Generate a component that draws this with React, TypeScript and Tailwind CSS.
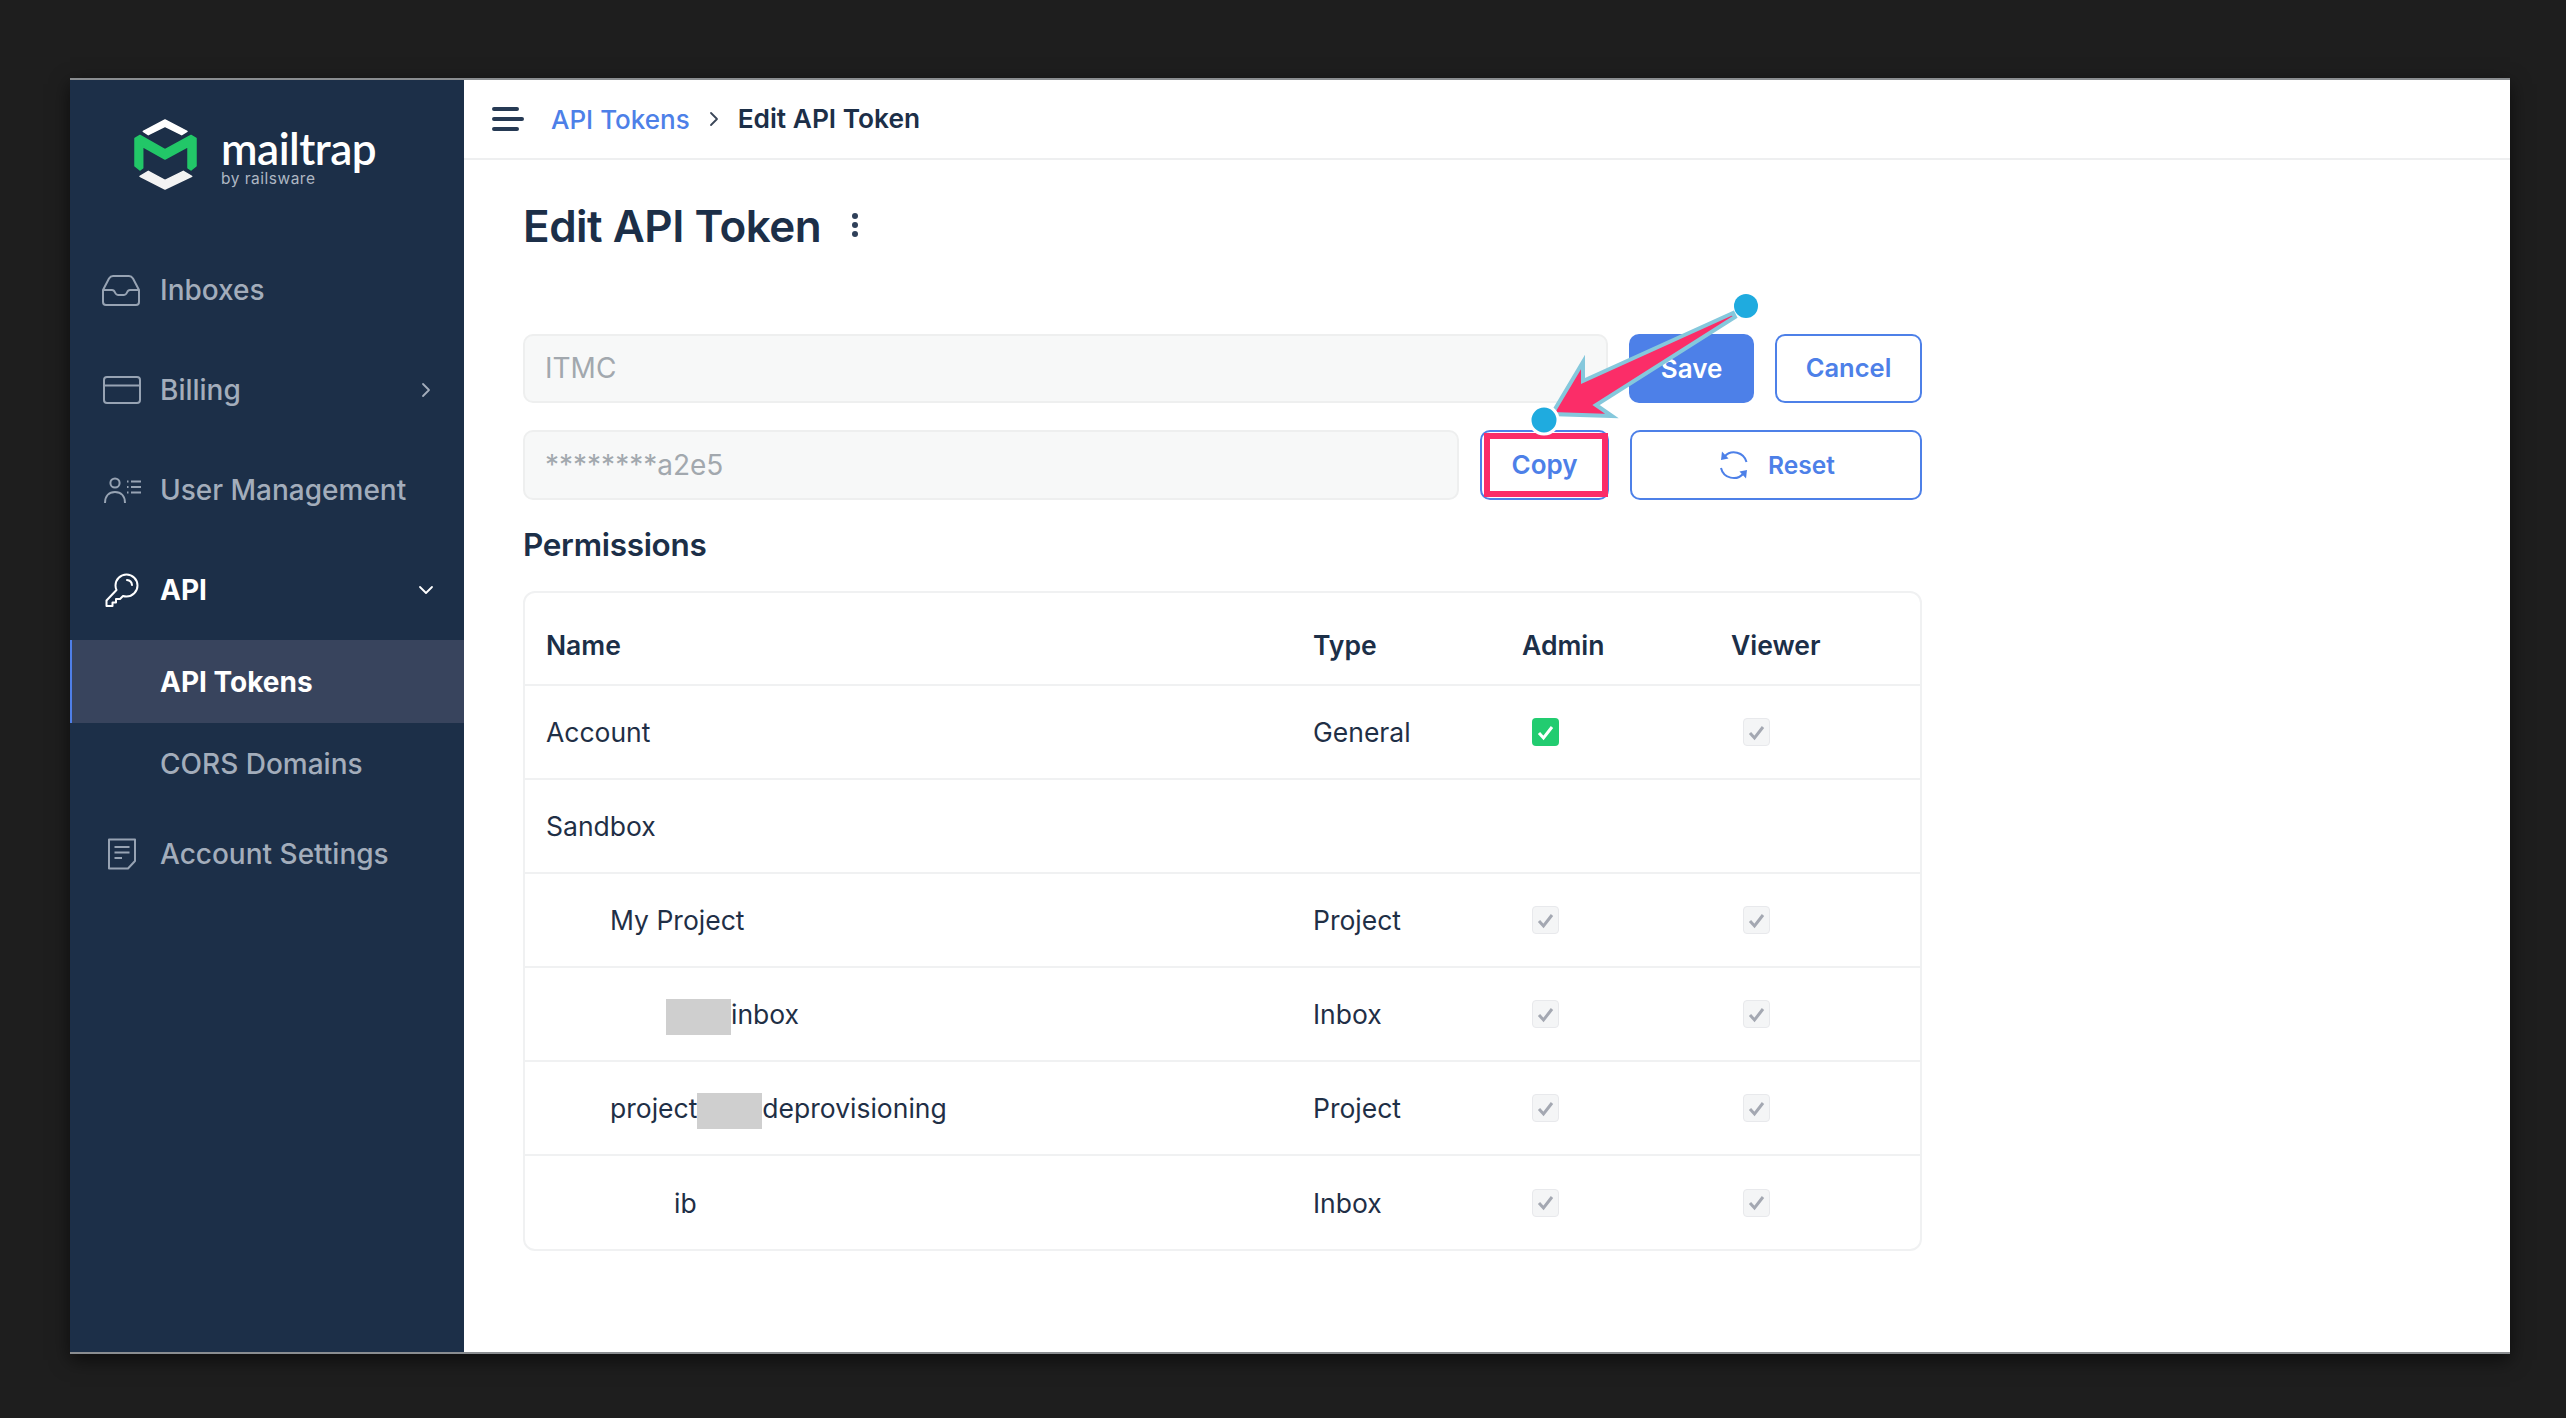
import React from "react";

const font = { fontFamily: '"Inter", "Liberation Sans", sans-serif' };

function Inbox() {
  return (
    <svg width="38" height="31" viewBox="0 0 38 31" fill="none" stroke="currentColor" strokeWidth="2">
      <path d="M1 15 L7 3.5 Q8.5 1 11 1 H27 Q29.5 1 31 3.5 L37 15 V27 Q37 30 34 30 H4 Q1 30 1 27 Z" strokeLinejoin="round" />
      <path d="M1 15 H10 Q12 15 13 17.5 Q14 20 16.5 20 H21.5 Q24 20 25 17.5 Q26 15 28 15 H37" />
    </svg>
  );
}
function Card() {
  return (
    <svg width="38" height="28" viewBox="0 0 38 28" fill="none" stroke="currentColor" strokeWidth="2" className="ml-[1px]">
      <rect x="1" y="1" width="36" height="26" rx="3" />
      <path d="M1 9.5 H37" />
    </svg>
  );
}
function UserList() {
  return (
    <svg width="38" height="27" viewBox="0 0 38 27" fill="none" stroke="currentColor" strokeWidth="2" className="ml-[2px]">
      <circle cx="11" cy="6" r="4.6" />
      <path d="M1 26 C1 19 5 15 11 15 C17 15 21 19 21 26" />
      <path d="M27 4.5 H37 M27 10 H37 M27 15.5 H37 M23 4.5 H24.5 M23 10 H24.5 M23 15.5 H24.5" />
    </svg>
  );
}
function Key() {
  return (
    <svg width="34" height="34" viewBox="0 0 34 34" fill="none" stroke="currentColor" strokeWidth="2" strokeLinejoin="round" className="ml-[3px]">
      <path d="M21.5 1.5 A11 11 0 0 1 32.5 12.5 A11 11 0 0 1 21.5 23.5 A11 11 0 0 1 18 23 L15 26 H11 V29.5 H7.5 V33 H1.5 V27.5 L11.5 17 A11 11 0 0 1 10.5 12.5 A11 11 0 0 1 21.5 1.5 Z" />
      <path d="M22 7 A5.5 5.5 0 0 1 27 12" strokeLinecap="round" />
    </svg>
  );
}
function Doc() {
  return (
    <svg width="30" height="32" viewBox="0 0 30 32" fill="none" stroke="currentColor" strokeWidth="2" strokeLinejoin="round" className="ml-[5px]">
      <path d="M2 1.5 H28 V23 L21 30.5 H2 Z" />
      <path d="M7.5 9 H22.5 M7.5 14.5 H22.5 M7.5 20 H15" />
    </svg>
  );
}
function Chevron({ down, className }: { down?: boolean; className?: string }) {
  return (
    <svg width="16" height="16" viewBox="0 0 16 16" fill="none" stroke="currentColor" strokeWidth="1.8" strokeLinecap="round" strokeLinejoin="round" className={className}>
      {down ? <path d="M2 5 L8 11 L14 5" /> : <path d="M5 2 L11 8 L5 14" />}
    </svg>
  );
}
function Logo() {
  return (
    <svg width="63" height="71" viewBox="0 0 63 71" strokeLinejoin="round">
      <path d="M9.3 12.3 L31 1 L53 12.3 L47.7 15.7 L31 7.3 L14.3 15.7 Z" fill="#fff" stroke="#fff" strokeWidth="1.5" />
      <path d="M1 19.5 L6 16.5 L31 30.7 L57 16.5 L62 19.5 V47 L57 51 L54 49 V27.5 L31 40 L8.7 27.5 V49 L6 51 L1 47 Z" fill="#22c768" stroke="#22c768" strokeWidth="1.5" />
      <path d="M6 57.3 L14.3 52.3 L31 61.3 L49.3 52.3 L57.7 57.3 L31 70 Z" fill="#f3f3f3" stroke="#f3f3f3" strokeWidth="1.5" />
    </svg>
  );
}
function Reset() {
  return (
    <svg width="30" height="30" viewBox="0 0 30 30" fill="none" stroke="#4d80e8" strokeWidth="2">
      <path d="M5.5 6.5 A13 13 0 0 1 27.5 12" />
      <path d="M24.5 23.5 A13 13 0 0 1 2 18" />
      <path d="M3 1.5 L9.5 8.5 L2 10 Z" fill="#4d80e8" stroke="none" />
      <path d="M27 28.5 L20.5 21.5 L28 20 Z" fill="#4d80e8" stroke="none" />
    </svg>
  );
}
function Check({ on, viewer }: { on?: boolean; viewer?: boolean }) {
  const place = viewer ? "ml-[12px] " : "ml-[10px] ";
  return (
    <div className={place + (on ? "flex h-[28px] w-[27px] items-center justify-center rounded-[4px] bg-[#22cc70]" : "flex h-[28px] w-[27px] items-center justify-center rounded-[4px] border border-[#e8e9ec] bg-[#f4f5f6]")}>
      <svg width="19" height="17" viewBox="0 0 19 17" fill="none" stroke={on ? "#fff" : "#a4a8b2"} strokeWidth="3">
        <path d="M3 9 L7.5 14 L16 3" />
      </svg>
    </div>
  );
}

const navText = "text-[28px] font-medium text-[#a3adbb]";

function NavRow({ icon, label, right, active }: { icon: React.ReactNode; label: string; right?: React.ReactNode; active?: boolean }) {
  return (
    <div className="flex h-[100px] items-center pl-[32px] pr-[30px]">
      <div className={active ? "flex w-[58px] shrink-0 justify-start text-white" : "flex w-[58px] shrink-0 justify-start text-[#97a3b3]"}>{icon}</div>
      <span className={active ? "text-[28px] font-bold text-white" : navText}>{label}</span>
      <div className="ml-auto flex">{right}</div>
    </div>
  );
}

function Redact() {
  return <span className="inline-block h-[36px] w-[65px] bg-[#cfcfcf] align-middle" />;
}

function Row({ name, indent, type, admin, checks = true, last }: { name: React.ReactNode; indent: string; type?: string; admin?: boolean; checks?: boolean; last?: boolean }) {
  return (
    <div className={last ? "grid h-[93px] grid-cols-[767px_209px_209px_1fr] items-center px-[21px] text-[#1f2f46]" : "grid h-[94px] grid-cols-[767px_209px_209px_1fr] items-center border-b-2 border-[#f0f1f2] px-[21px] text-[#1f2f46]"}>
      <div className={indent + " pt-[2px]"}>{name}</div>
      <div className="pt-[2px]">{type}</div>
      <div>{checks && <Check on={admin} />}</div>
      <div>{checks && <Check viewer />}</div>
    </div>
  );
}

export default function App() {
  return (
    <div className="relative h-[1418px] w-full overflow-hidden bg-[#1e1e1e] pt-[78px] pl-[70px] pr-[56px]" style={font}>
      <div className="flex h-[1276px] border-y-2 border-[#8a8d90] shadow-[0_6px_18px_rgba(0,0,0,0.6)]">
        <aside className="flex w-[394px] shrink-0 flex-col bg-[#1c2f48]">
          <div className="flex h-[160px] items-start pt-[39px] pl-[64px]">
            <Logo />
            <div className="ml-[24px] flex flex-col pt-[7px]">
              <span className="text-[44px] leading-[44px] font-semibold tracking-[-0.5px] text-white" style={{ fontFamily: '"Lato", sans-serif' }}>mailtrap</span>
              <span className="text-[15.5px] leading-[18px] tracking-[0.5px] text-[#aeb7c3]">by railsware</span>
            </div>
          </div>
          <NavRow icon={<Inbox />} label="Inboxes" />
          <NavRow icon={<Card />} label="Billing" right={<Chevron className="text-[#a3adbb]" />} />
          <NavRow icon={<UserList />} label="User Management" />
          <NavRow icon={<Key />} label="API" active right={<Chevron down className="text-white" />} />
          <div className="flex h-[83px] items-center border-l-2 border-[#4f7fe8] bg-[#38445d] pl-[88px] text-[28px] font-bold text-white">API Tokens</div>
          <div className={"flex h-[81px] items-center pl-[90px] " + navText}>CORS Domains</div>
          <NavRow icon={<Doc />} label="Account Settings" />
        </aside>
        <main className="flex min-w-0 flex-1 flex-col bg-white">
          <header className="flex h-[80px] shrink-0 items-center border-b-2 border-[#eeeff0] pl-[28px]">
            <svg width="32" height="26" viewBox="0 0 32 26" stroke="#263a54" strokeWidth="4" strokeLinecap="round">
              <path d="M2 3 H25 M2 13 H30 M2 23 H25" />
            </svg>
            <span className="ml-[27px] text-[26px] font-medium text-[#4d80e8]">API Tokens</span>
            <Chevron className="mx-[16px] text-[#3a4658]" />
            <span className="text-[26.3px] font-semibold text-[#1c2f48]">Edit API Token</span>
          </header>
          <div className="flex flex-1 flex-col pl-[59px]">
            <div className="flex h-[132px] items-center">
              <h1 className="text-[44px] font-semibold tracking-[-0.5px] text-[#1c2f48]">Edit API Token</h1>
              <div className="ml-[31px] flex flex-col gap-[3px] pb-[3px]">
                <span className="h-[6px] w-[6px] rounded-full bg-[#2f4059]" />
                <span className="h-[6px] w-[6px] rounded-full bg-[#2f4059]" />
                <span className="h-[6px] w-[6px] rounded-full bg-[#2f4059]" />
              </div>
            </div>
            <div className="mt-[42px] flex w-[1399px] gap-[21px]">
              <div className="flex h-[69px] flex-1 items-center rounded-[10px] border-2 border-[#eeefef] bg-[#f7f8f8] pb-[2px] pl-[20px] text-[28px] text-[#a2a8ae]">ITMC</div>
              <button className="h-[69px] w-[125px] rounded-[10px] bg-[#4d80e8] text-[26px] font-semibold text-white">Save</button>
              <button className="h-[69px] w-[147px] rounded-[10px] border-2 border-[#4d80e8] text-[25.5px] font-semibold text-[#4d80e8]">Cancel</button>
            </div>
            <div className="mt-[27px] flex w-[1399px] gap-[21px]">
              <div className="flex h-[70px] flex-1 items-center rounded-[10px] border-2 border-[#eeefef] bg-[#f7f8f8] pl-[20px] text-[28px] text-[#a2a8ae]">********a2e5</div>
              <button className="h-[70px] w-[129px] rounded-[10px] border-2 border-[#4d80e8] pb-[2px] text-[26px] font-semibold text-[#4d80e8]">Copy</button>
              <button className="flex h-[70px] w-[292px] items-center justify-center gap-[19px] rounded-[10px] border-2 border-[#4d80e8] pl-[2px] text-[24.5px] font-semibold text-[#4d80e8]">
                <Reset />
                Reset
              </button>
            </div>
            <h2 className="mt-[26px] text-[31.5px] leading-[38px] font-semibold tracking-[-0.3px] text-[#1c2f48]">Permissions</h2>
            <div className="mt-[27px] w-[1399px] rounded-[12px] border-2 border-[#f0f1f2] text-[26.5px]">
              <div className="grid h-[93px] grid-cols-[767px_209px_209px_1fr] items-center border-b-2 border-[#f0f1f2] px-[21px] pt-[15px] font-semibold text-[#1c2f48]">
                <div>Name</div>
                <div>Type</div>
                <div>Admin</div>
                <div>Viewer</div>
              </div>
              <Row name="Account" indent="" type="General" admin />
              <Row name="Sandbox" indent="" checks={false} />
              <Row name="My Project" indent="pl-[64px]" type="Project" />
              <Row name={<><Redact />inbox</>} indent="pl-[120px]" type="Inbox" />
              <Row name={<>project<Redact />deprovisioning</>} indent="pl-[64px]" type="Project" />
              <Row name="ib" indent="pl-[128px]" type="Inbox" last />
            </div>
          </div>
        </main>
      </div>
      <svg className="pointer-events-none absolute inset-0" width="2566" height="1418" viewBox="0 0 2566 1418" fill="none">
        <rect x="1487" y="436" width="118" height="58" stroke="#fb2d68" strokeWidth="6" />
        <path d="M1733 313 L1583 381 L1583 362 L1552 414 L1612 416 L1596 405 L1735 317 Z" fill="#fb2d68" stroke="#85c8dc" strokeWidth="4" strokeLinejoin="miter" />
        <circle cx="1746" cy="306" r="12" fill="#1fabdf" />
        <circle cx="1544" cy="420" r="14" fill="#1fabdf" stroke="#fff" strokeWidth="3" />
      </svg>
    </div>
  );
}
